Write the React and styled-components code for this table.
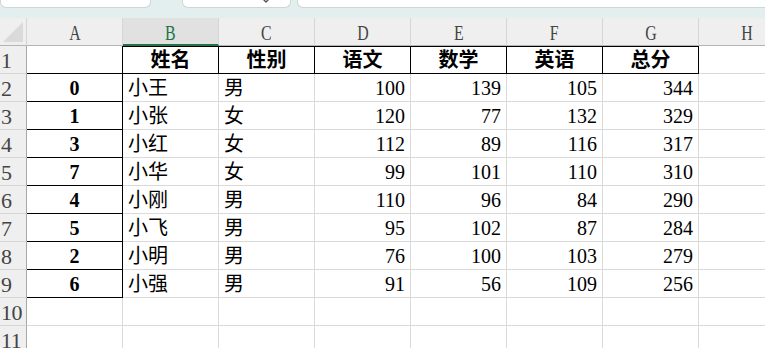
import React from "react";
import styled, { createGlobalStyle } from "styled-components";

const GlobalStyle = createGlobalStyle`
  html, body {
    margin: 0;
    padding: 0;
    background: #ffffff;
    overflow: hidden;
  }
`;

const SERIF = `"Liberation Serif", "Noto Sans CJK SC", serif`;

const Page = styled.div`
  display: flex;
  flex-direction: column;
  width: 765px;
  height: 348px;
  overflow: hidden;
`;

const TabStrip = styled.div`
  display: flex;
  align-items: flex-start;
  height: 18px;
  background: #e2efee;
  flex: none;
`;

const Tab = styled.div`
  box-sizing: border-box;
  height: 8px;
  width: ${(p) => (p.$grow ? "auto" : `${p.$w}px`)};
  margin-left: ${(p) => p.$ml || 0}px;
  flex: ${(p) => (p.$grow ? "1 1 auto" : "none")};
  background: #ffffff;
  border: 1px solid #cfd6d6;
  border-top: none;
  border-right: ${(p) => (p.$grow ? "none" : "1px solid #cfd6d6")};
  border-radius: ${(p) => (p.$grow ? "0 0 0 6px" : "0 0 6px 6px")};
  display: flex;
  justify-content: flex-end;
  padding-right: 20px;
`;

const Chevron = styled.svg`
  width: 8px;
  height: 4px;
  margin-top: -1px;
`;

const Sheet = styled.div`
  display: grid;
  grid-template-columns: 27px repeat(8, 96px);
  grid-auto-rows: 28px;
  font-family: ${SERIF};
`;

const Corner = styled.div`
  box-sizing: border-box;
  background: #efefef;
  border-right: 1px solid #d6d6d6;
  border-bottom: 1px solid #b4b4b4;
  display: flex;
  align-items: flex-end;
  justify-content: flex-end;
  padding: 0 3px 3px 0;
`;

const CornerMark = styled.div`
  width: 20px;
  height: 20px;
  background: #dadada;
  clip-path: polygon(100% 0, 100% 100%, 0 100%);
`;

const ColHeader = styled.div`
  box-sizing: border-box;
  background: ${(p) => (p.$active ? "#e1e1e1" : "#efefef")};
  border-right: 1px solid #d6d6d6;
  border-bottom: ${(p) => (p.$active ? "2px solid #217346" : "1px solid #b4b4b4")};
  color: ${(p) => (p.$active ? "#217346" : "#444444")};
  display: flex;
  align-items: flex-end;
  justify-content: center;
  padding-bottom: ${(p) => (p.$active ? 0 : 1)}px;
  font-size: 22px;
  line-height: 22px;
`;

const Letter = styled.span`
  display: inline-block;
  transform: scaleX(0.72);
`;

const RowHeader = styled.div`
  box-sizing: border-box;
  background: #efefef;
  border-right: 1px solid #a8a8a8;
  border-bottom: 1px solid #d6d6d6;
  color: #444444;
  display: flex;
  align-items: flex-end;
  padding: 0 0 1px 1px;
  font-size: 22px;
  line-height: 22px;
  letter-spacing: -0.5px;
`;

const Cell = styled.div`
  box-sizing: border-box;
  background: #ffffff;
  border-right: 1px solid ${(p) => p.$right};
  border-bottom: 1px solid ${(p) => p.$bottom};
  border-top: ${(p) => (p.$top ? "1px solid #000" : "none")};
  color: #000000;
  display: flex;
  align-items: flex-end;
  justify-content: ${(p) =>
    p.$align === "right" ? "flex-end" : p.$align === "center" ? "center" : "flex-start"};
  padding: 0 5px 2px 5px;
  font-size: 20px;
  line-height: 22px;
  font-weight: ${(p) => (p.$bold ? 700 : 400)};
  white-space: nowrap;
  overflow: hidden;
`;

const GRID = "#dadada";
const INK = "#000000";

const COLS = ["A", "B", "C", "D", "E", "F", "G", "H"];

const HEAD = ["", "姓名", "性别", "语文", "数学", "英语", "总分", ""];

const SCORES = [
  [0, "小王", "男", 100, 139, 105, 344],
  [1, "小张", "女", 120, 77, 132, 329],
  [3, "小红", "女", 112, 89, 116, 317],
  [7, "小华", "女", 99, 101, 110, 310],
  [4, "小刚", "男", 110, 96, 84, 290],
  [5, "小飞", "男", 95, 102, 87, 284],
  [2, "小明", "男", 76, 100, 103, 279],
  [6, "小强", "男", 91, 56, 109, 256],
];

const ROWS = [HEAD, ...SCORES.map((r) => [...r, ""]), Array(8).fill(""), Array(8).fill("")];

// Thick black frame: the header labels (B1:G1) and the index column (A2:A9)
const framed = (r, c) => (r === 1 && c >= 1 && c <= 6) || (c === 0 && r >= 2 && r <= 9);

const alignOf = (r, c) => {
  if (r === 1 || c === 0) return "center";
  if (c === 1 || c === 2) return "left";
  return "right";
};

export default function App() {
  return (
    <>
      <GlobalStyle />
      <Page>
        <TabStrip>
          <Tab $w={151} />
          <Tab $w={109} $ml={31}>
            <Chevron viewBox="0 0 8 4">
              <path d="M1 0 L4 3 L7 0" fill="none" stroke="#555" strokeWidth="1.4" />
            </Chevron>
          </Tab>
          <Tab $ml={6} $grow />
        </TabStrip>
        <Sheet>
          <Corner>
            <CornerMark />
          </Corner>
          {COLS.map((c) => (
            <ColHeader key={c} $active={c === "B"}>
              <Letter>{c}</Letter>
            </ColHeader>
          ))}
          {ROWS.map((vals, i) => {
            const r = i + 1;
            return (
              <React.Fragment key={r}>
                <RowHeader>{r}</RowHeader>
                {COLS.map((_, c) => (
                  <Cell
                    key={c}
                    $align={alignOf(r, c)}
                    $bold={r === 1 || c === 0}
                    $right={framed(r, c) || framed(r, c + 1) ? INK : GRID}
                    $bottom={framed(r, c) || framed(r + 1, c) ? INK : GRID}
                    $top={r === 1 && framed(r, c)}
                  >
                    {vals[c]}
                  </Cell>
                ))}
              </React.Fragment>
            );
          })}
        </Sheet>
      </Page>
    </>
  );
}
